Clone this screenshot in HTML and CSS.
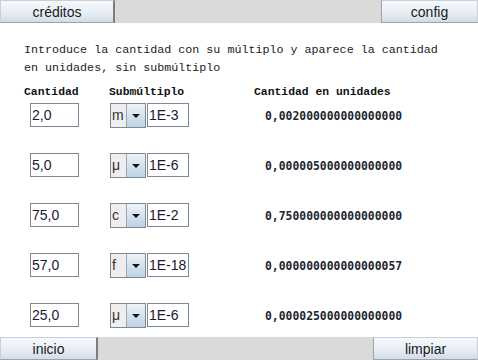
FILE: index.html
```html
<!DOCTYPE html>
<html lang="es">
<head>
  <meta charset="UTF-8" />
  <meta name="viewport" content="width=device-width, initial-scale=1.0"/>
  <title>Submúltiplos</title>
  <link rel="stylesheet" href="styles.css">
</head>
<body>
  <div class="bar">
    <button class="btn btn-creditos">créditos</button>
    <button class="btn btn-config">config</button>
  </div>

  <main class="content">
    <p class="intro">Introduce la cantidad con su múltiplo y aparece la cantidad<br>en unidades, sin submúltiplo</p>

    <div class="grid">
      <div class="head">Cantidad</div>
      <div class="head">Submúltiplo</div>
      <div class="head">Cantidad en unidades</div>

      <div class="cell-qty"><input class="field qty" value="2,0"></div>
      <div class="cell-sub">
        <div class="combo"><span class="combo-val">m</span><span class="combo-btn"></span></div>
        <input class="field exp" value="1E-3">
      </div>
      <div class="result">0,002000000000000000</div>

      <div class="cell-qty"><input class="field qty" value="5,0"></div>
      <div class="cell-sub">
        <div class="combo"><span class="combo-val">μ</span><span class="combo-btn"></span></div>
        <input class="field exp" value="1E-6">
      </div>
      <div class="result">0,000005000000000000</div>

      <div class="cell-qty"><input class="field qty" value="75,0"></div>
      <div class="cell-sub">
        <div class="combo"><span class="combo-val">c</span><span class="combo-btn"></span></div>
        <input class="field exp" value="1E-2">
      </div>
      <div class="result">0,750000000000000000</div>

      <div class="cell-qty"><input class="field qty" value="57,0"></div>
      <div class="cell-sub">
        <div class="combo"><span class="combo-val">f</span><span class="combo-btn"></span></div>
        <input class="field exp" value="1E-18">
      </div>
      <div class="result">0,000000000000000057</div>

      <div class="cell-qty"><input class="field qty" value="25,0"></div>
      <div class="cell-sub">
        <div class="combo"><span class="combo-val">μ</span><span class="combo-btn"></span></div>
        <input class="field exp" value="1E-6">
      </div>
      <div class="result">0,000025000000000000</div>
    </div>
  </main>

  <div class="bar">
    <button class="btn btn-inicio">inicio</button>
    <button class="btn btn-limpiar">limpiar</button>
  </div>
</body>
</html>
```

FILE: styles.css
```css
body {
  margin: 0;
  width: 478px;
  height: 360px;
  display: flex;
  flex-direction: column;
  background: #fff;
  font-family: "Liberation Sans", Arial, sans-serif;
  overflow: hidden;
}
.bar {
  height: 23px;
  background: #dadada;
  display: flex;
  justify-content: space-between;
  flex-shrink: 0;
}
.btn {
  height: 23px;
  padding: 0;
  margin: 0;
  font-family: "Liberation Sans", Arial, sans-serif;
  font-size: 14px;
  color: #1a1a1a;
  background: linear-gradient(#f6f9fc, #e8eef5 55%, #d3dbe5);
  border: 1px solid #c8cfd8;
  border-right: 2px solid #7d7d7d;
  border-bottom-color: #9aa4ae;
}
.btn-config, .btn-limpiar {
  border-right: 1px solid #c8cfd8;
  border-left: 1px solid #9aa4ae;
}
.btn-creditos { width: 115px; }
.btn-config { width: 97px; }
.btn-inicio { width: 98px; }
.btn-limpiar { width: 105px; }

.content {
  flex: 1;
  padding: 18px 0 0 24px;
  overflow: hidden;
}
.intro {
  margin: 0;
  font-family: "Liberation Mono", "Courier New", monospace;
  font-size: 11.7px;
  line-height: 18px;
  color: #222;
}
.grid {
  margin-top: 8px;
  display: grid;
  grid-template-columns: 85px 145px 1fr;
  grid-template-rows: 18px repeat(4, 50px) 24px;
  align-items: start;
}
.head {
  font-family: "Liberation Mono", "Courier New", monospace;
  font-weight: bold;
  font-size: 11.4px;
  line-height: 14px;
  color: #111;
}
.cell-qty {
  padding-left: 6px;
}
.cell-sub {
  padding-left: 1px;
  display: flex;
  gap: 1px;
}
.field {
  box-sizing: border-box;
  height: 24px;
  margin: 0;
  padding: 0 1px;
  border: 1px solid #7a8a99;
  font-family: "Liberation Sans", Arial, sans-serif;
  font-size: 14px;
  color: #1a1a33;
  background: #fff;
  outline: none;
}
.qty { width: 49px; }
.exp { width: 42px; }
.combo {
  box-sizing: border-box;
  width: 36px;
  height: 25px;
  display: flex;
  border: 1px solid #7a8a99;
  background: #eee;
}
.combo-val {
  width: 14px;
  font-size: 14px;
  line-height: 23px;
  padding-left: 1px;
  color: #333;
  border-right: 1px solid #9aa8b6;
  overflow: hidden;
}
.combo-btn {
  flex: 1;
  position: relative;
  background: linear-gradient(#eef3f8, #d6e2ee 50%, #bfd2e5);
}
.combo-btn::after {
  content: "";
  position: absolute;
  left: 5px;
  top: 10px;
  border-left: 4px solid transparent;
  border-right: 4px solid transparent;
  border-top: 4px solid #111;
}
.result {
  padding-left: 11px;
  line-height: 26px;
  font-family: "DejaVu Sans Mono", monospace;
  font-weight: bold;
  font-size: 11.4px;
  color: #1e2630;
}
```
